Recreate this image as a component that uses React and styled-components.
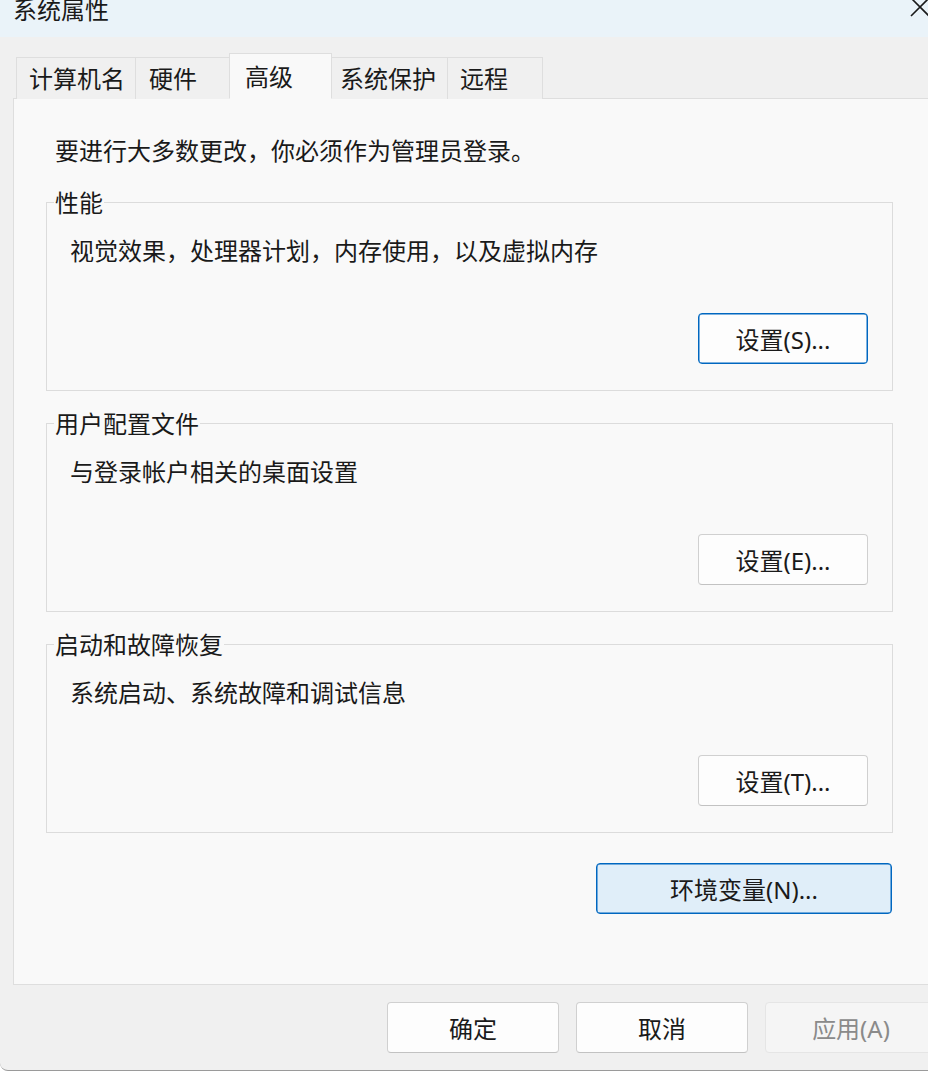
import React from "react";
import styled, { createGlobalStyle } from "styled-components";

const GlobalStyle = createGlobalStyle`
  html, body {
    margin: 0;
    padding: 0;
    background: #ffffff;
    overflow: hidden;
  }
  body {
    font-family: "Noto Sans", "Noto Sans CJK SC", sans-serif;
    color: #1a1a1a;
  }
`;

const Window = styled.div`
  width: 950px;
  height: 1070px;
  background: #f0f0f0;
  border-bottom: 1px solid #9a9a9a;
  border-bottom-left-radius: 8px;
  display: flex;
  flex-direction: column;
  overflow: hidden;
`;

const TitleBar = styled.div`
  height: 37px;
  flex: none;
  background: #eaf3f9;
  display: flex;
  justify-content: space-between;
  align-items: flex-start;
  padding: 0 20px 0 13px;
  overflow: hidden;
`;

const Title = styled.div`
  font-size: 24px;
  line-height: 24px;
  margin-top: -3px;
  font-family: "Noto Sans CJK SC", sans-serif;
`;

const CloseIcon = styled.svg`
  width: 20px;
  height: 20px;
  margin-top: -3px;
`;

const TabRow = styled.div`
  display: flex;
  align-items: flex-end;
  margin: 16px 0 -1px 16px;
  position: relative;
  z-index: 1;
`;

const Tab = styled.div`
  box-sizing: border-box;
  width: ${(p) => p.$w}px;
  height: ${(p) => (p.$active ? 46 : 42)}px;
  background: ${(p) => (p.$active ? "#f9f9f9" : "#f0f0f0")};
  border: 1px solid #dedede;
  border-bottom: ${(p) => (p.$active ? "1px solid #f9f9f9" : "none")};
  border-left: ${(p) => (p.$first || p.$active ? "1px solid #dedede" : "none")};
  border-right: ${(p) => (p.$beforeActive ? "none" : "1px solid #dedede")};
  display: flex;
  align-items: center;
  padding-left: ${(p) => p.$pl}px;
  font-size: 24px;
  line-height: 24px;
  font-family: "Noto Sans CJK SC", sans-serif;
  padding-bottom: 1px;
`;

const Panel = styled.div`
  box-sizing: border-box;
  margin: 0 13px;
  height: 887px;
  flex: none;
  background: #f9f9f9;
  border: 1px solid #dedede;
  padding: 39px 0 0 32px;
  display: flex;
  flex-direction: column;
`;

const Intro = styled.div`
  font-size: 24px;
  line-height: 24px;
  margin-left: 9px;
  font-family: "Noto Sans CJK SC", sans-serif;
`;

const Group = styled.fieldset`
  box-sizing: border-box;
  width: 847px;
  margin: ${(p) => (p.$first ? 28 : 20)}px 0 0 0;
  padding: 24px 24px 26px 23px;
  border: 1px solid #dcdcdc;
  display: flex;
  flex-direction: column;
  min-width: 0;
`;

const Legend = styled.legend`
  font-size: 24px;
  line-height: 24px;
  padding: 0 1px;
  margin-left: -16px;
  font-family: "Noto Sans CJK SC", sans-serif;
`;

const Desc = styled.div`
  font-size: 24px;
  line-height: 24px;
  font-family: "Noto Sans CJK SC", sans-serif;
`;

const Button = styled.button`
  box-sizing: border-box;
  width: ${(p) => p.$w || 170}px;
  height: 51px;
  border-radius: 4px;
  border: 1px solid ${(p) => (p.$focus ? "#0067c0" : "#d0d0d0")};
  border-bottom-color: ${(p) => (p.$focus ? "#0067c0" : "#c2c2c2")};
  box-shadow: ${(p) => (p.$focus ? "inset 0 0 0 0.5px #0067c0" : "none")};
  background: ${(p) => (p.$accent ? "#e0eef9" : "#fdfdfd")};
  color: #1a1a1a;
  font-size: 24px;
  font-family: "Noto Sans", "Noto Sans CJK SC", sans-serif;
  padding: 0;
  display: flex;
  align-items: center;
  justify-content: center;
  &:disabled {
    background: #f5f5f5;
    border-color: #e5e5e5;
    color: #8a8a8a;
  }
`;

const GroupButton = styled(Button)`
  align-self: flex-end;
  margin-top: 51px;
`;

const EnvButton = styled(Button)`
  margin: 30px 0 0 550px;
`;

const Footer = styled.div`
  display: flex;
  justify-content: flex-end;
  gap: 17px;
  padding: 17px 13px 0 0;
`;

const tabs = [
  { label: "计算机名", w: 120, pl: 12 },
  { label: "硬件", w: 93, pl: 13 },
  { label: "高级", w: 103, pl: 15, active: true },
  { label: "系统保护", w: 116, pl: 8 },
  { label: "远程", w: 95, pl: 12 },
];

const groups = [
  { title: "性能", desc: "视觉效果，处理器计划，内存使用，以及虚拟内存", btn: "设置(S)...", focus: true },
  { title: "用户配置文件", desc: "与登录帐户相关的桌面设置", btn: "设置(E)..." },
  { title: "启动和故障恢复", desc: "系统启动、系统故障和调试信息", btn: "设置(T)..." },
];

export default function App() {
  return (
    <>
      <GlobalStyle />
      <Window>
        <TitleBar>
          <Title>系统属性</Title>
          <CloseIcon viewBox="0 0 20 20">
            <path d="M1 1 L19 19 M19 1 L1 19" stroke="#1a1a1a" strokeWidth="1.6" fill="none" />
          </CloseIcon>
        </TitleBar>
        <TabRow>
          {tabs.map((t, i) => (
            <Tab
              key={t.label}
              $w={t.w}
              $pl={t.pl}
              $active={t.active}
              $first={i === 0}
              $beforeActive={tabs[i + 1] && tabs[i + 1].active}
            >
              {t.label}
            </Tab>
          ))}
        </TabRow>
        <Panel>
          <Intro>要进行大多数更改，你必须作为管理员登录。</Intro>
          {groups.map((g, i) => (
            <Group key={g.title} $first={i === 0}>
              <Legend>{g.title}</Legend>
              <Desc>{g.desc}</Desc>
              <GroupButton $focus={g.focus}>{g.btn}</GroupButton>
            </Group>
          ))}
          <EnvButton $w={296} $focus $accent>
            环境变量(N)...
          </EnvButton>
        </Panel>
        <Footer>
          <Button $w={172}>确定</Button>
          <Button $w={172}>取消</Button>
          <Button $w={172} disabled>
            应用(A)
          </Button>
        </Footer>
      </Window>
    </>
  );
}
